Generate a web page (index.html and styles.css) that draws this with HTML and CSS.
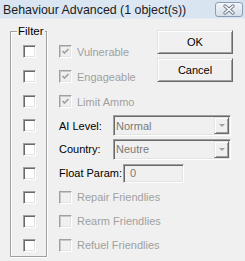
FILE: index.html
```html
<!DOCTYPE html>
<html lang="en">
<head>
    <meta charset="UTF-8">
    <title>Behaviour Advanced</title>
    <link rel="stylesheet" href="styles.css">
</head>
<body>
    <div class="window">
        <div class="titlebar">
            <span class="title">Behaviour Advanced (1 object(s))</span>
            <span class="close">
                <svg width="28" height="15" viewBox="0 0 28 15">
                    <defs>
                        <linearGradient id="cg" x1="0" y1="0" x2="0" y2="1">
                            <stop offset="0" stop-color="#f3f6fa"/>
                            <stop offset="1" stop-color="#d3dde9"/>
                        </linearGradient>
                    </defs>
                    <rect x="0.5" y="0.5" width="27" height="14" rx="2.5" fill="url(#cg)" stroke="#8c9cb1"/>
                    <path d="M10 4 L18 11 M18 4 L10 11" stroke="#6d7888" stroke-width="3.4" stroke-linecap="round"/>
                    <path d="M10 4 L18 11 M18 4 L10 11" stroke="#fff" stroke-width="1.6" stroke-linecap="round"/>
                </svg>
            </span>
        </div>

        <div class="content">
            <div class="group"><span class="legend">Filter</span></div>

            <span class="box filter r1"></span>
            <span class="box filter r2"></span>
            <span class="box filter r3"></span>
            <span class="box filter r4"></span>
            <span class="box filter r5"></span>
            <span class="box filter r6"></span>
            <span class="box filter r7"></span>
            <span class="box filter r8"></span>
            <span class="box filter r9"></span>

            <div class="buttons">
                <button class="btn">OK</button>
                <button class="btn">Cancel</button>
            </div>

            <label class="check r1"><span class="box off"><svg width="9" height="9" viewBox="0 0 9 9"><path d="M1.5 4 L3.5 6 L7.5 2" fill="none" stroke="#a0a0a0" stroke-width="1.7"/></svg></span>Vulnerable</label>
            <label class="check r2"><span class="box off"><svg width="9" height="9" viewBox="0 0 9 9"><path d="M1.5 4 L3.5 6 L7.5 2" fill="none" stroke="#a0a0a0" stroke-width="1.7"/></svg></span>Engageable</label>
            <label class="check r3"><span class="box off"><svg width="9" height="9" viewBox="0 0 9 9"><path d="M1.5 4 L3.5 6 L7.5 2" fill="none" stroke="#a0a0a0" stroke-width="1.7"/></svg></span>Limit Ammo</label>

            <div class="field r4">
                <span>AI Level:</span>
                <div class="combo"><span class="value">Normal</span><span class="arrow"></span></div>
            </div>
            <div class="field r5">
                <span>Country:</span>
                <div class="combo"><span class="value">Neutre</span><span class="arrow"></span></div>
            </div>
            <div class="field float r6">
                <span>Float Param:</span>
                <div class="edit">0</div>
            </div>

            <label class="check r7"><span class="box off"></span>Repair Friendlies</label>
            <label class="check r8"><span class="box off"></span>Rearm Friendlies</label>
            <label class="check r9"><span class="box off"></span>Refuel Friendlies</label>
        </div>
    </div>
</body>
</html>
```

FILE: styles.css
```css
body {
    margin: 0;
    background-color: #f0f0f0;
    font-family: "Liberation Sans", Arial, sans-serif;
    font-size: 11px;
    color: #000;
}
.window {
    width: 245px;
    height: 261px;
    overflow: hidden;
}
.titlebar {
    height: 19px;
    display: flex;
    justify-content: space-between;
    align-items: center;
    padding: 0 2px 0 3px;
    box-sizing: border-box;
    background: linear-gradient(to right, #d8e4f1, #dce7f3 60%, #d6e2ef);
    border-bottom: 1px solid #e3ebf4;
}
.title {
    font-size: 12.4px;
    color: #1b1b1b;
    margin-top: 1px;
}
.close {
    display: flex;
    margin-top: 1px;
}
.content {
    display: grid;
    grid-template-columns: 37px 1fr;
    grid-template-rows: 20px 25px 25px 25px 23px 24px 24px 24px 24px 24px;
    column-gap: 12px;
    padding: 0 12px 0 10px;
}
.r1 { grid-row: 2; }
.r2 { grid-row: 3; }
.r3 { grid-row: 4; }
.r4 { grid-row: 5; }
.r5 { grid-row: 6; }
.r6 { grid-row: 7; }
.r7 { grid-row: 8; }
.r8 { grid-row: 9; }
.r9 { grid-row: 10; }
.group {
    grid-column: 1;
    grid-row: 1 / 11;
    margin-top: 12px;
    position: relative;
    border: 1px solid #a0a0a0;
    box-shadow: inset 1px 1px 0 #fff, 1px 1px 0 #fff;
}
.legend {
    position: absolute;
    left: 6px;
    top: -8px;
    padding: 0 1px;
    background-color: #f0f0f0;
    font-size: 11.5px;
    line-height: 14px;
}
.box {
    width: 13px;
    height: 13px;
    box-sizing: border-box;
    border: 1px solid;
    border-color: #a0a0a0 #fff #fff #a0a0a0;
    box-shadow: inset 1px 1px 0 #696969, inset -1px -1px 0 #e3e3e3;
    background-color: #fff;
    display: flex;
    align-items: center;
    justify-content: center;
}
.box.off {
    background-color: #f0f0f0;
    box-shadow: inset 1px 1px 0 #c8c8c8, inset -1px -1px 0 #e3e3e3;
}
.filter {
    grid-column: 1;
    justify-self: start;
    align-self: center;
    margin-left: 13px;
}
.check {
    grid-column: 2;
    justify-self: start;
    align-self: center;
    display: flex;
    align-items: center;
    gap: 5px;
    color: #a0a0a0;
}
.buttons {
    grid-column: 2;
    grid-row: 1 / 5;
    justify-self: end;
    align-self: start;
    margin-top: 11px;
    display: flex;
    flex-direction: column;
    gap: 4px;
    z-index: 1;
}
.btn {
    width: 76px;
    height: 24px;
    padding: 0;
    font-family: inherit;
    font-size: 11px;
    color: #000;
    background-color: #f0f0f0;
    border: 1px solid;
    border-color: #e3e3e3 #696969 #696969 #e3e3e3;
    box-shadow: inset 1px 1px 0 #fff, inset -1px -1px 0 #a0a0a0;
}
.field {
    grid-column: 2;
    align-self: center;
    display: grid;
    grid-template-columns: 54px 1fr;
    align-items: center;
    margin-right: 2px;
}
.field.float {
    grid-template-columns: 64px 61px;
}
.combo {
    height: 21px;
    box-sizing: border-box;
    border: 1px solid;
    border-color: #a0a0a0 #fff #fff #a0a0a0;
    box-shadow: inset 1px 1px 0 #696969, inset -1px -1px 0 #e3e3e3;
    display: flex;
    align-items: center;
    justify-content: space-between;
    padding: 1px 1px 1px 2px;
    color: #7a7a7a;
}
.arrow {
    width: 15px;
    height: 17px;
    box-sizing: border-box;
    border: 1px solid;
    border-color: #e3e3e3 #696969 #696969 #e3e3e3;
    box-shadow: inset 1px 1px 0 #fff, inset -1px -1px 0 #a0a0a0;
    display: flex;
    align-items: center;
    justify-content: center;
}
.arrow::after {
    content: "";
    border-left: 3px solid transparent;
    border-right: 3px solid transparent;
    border-top: 3px solid #a0a0a0;
}
.edit {
    height: 19px;
    box-sizing: border-box;
    border: 1px solid;
    border-color: #a0a0a0 #fff #fff #a0a0a0;
    box-shadow: inset 1px 1px 0 #696969, inset -1px -1px 0 #e3e3e3;
    padding: 0 0 0 6px;
    line-height: 17px;
    color: #7a7a7a;
}
```
